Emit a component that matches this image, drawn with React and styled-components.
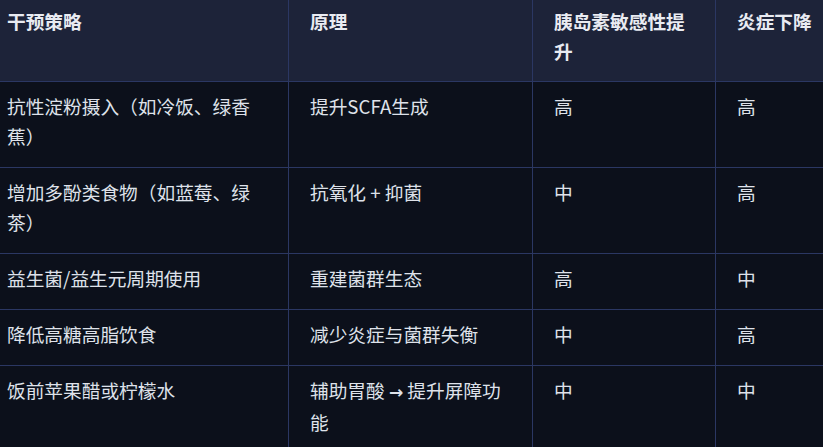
import styled, { createGlobalStyle } from 'styled-components'

const GlobalStyle = createGlobalStyle`
  html, body {
    margin: 0;
    padding: 0;
    background: #0c101b;
  }
  body {
    font-family: "Noto Sans CJK SC", "Noto Sans", sans-serif;
    color: #dfe2ea;
  }
`

const Viewport = styled.div`
  width: 823px;
  height: 447px;
  overflow: hidden;
  background: #0c101b;
`

const Table = styled.table`
  border-collapse: collapse;
  table-layout: fixed;
  width: 870px;
  margin: -4px 0 0 -15px;
  font-size: 18.7px;
  line-height: 30px;
`

const HeadCell = styled.th`
  box-sizing: border-box;
  background: #1d2339;
  color: #e9ebf2;
  font-weight: 700;
  text-align: left;
  vertical-align: top;
  padding: 9px 21px 15px;
  border: 1px solid #2b3763;
  width: ${p => p.$w}px;
`

const Cell = styled.td`
  box-sizing: border-box;
  vertical-align: top;
  padding: 9px 21px 16px;
  border: 1px solid #2b3763;
`

const Row = styled.tr`
  background: #0c101b;
`

const Arrow = styled.span`
  font-family: "DejaVu Sans", sans-serif;
  font-weight: 700;
  font-size: 17px;
`

const columns = [
  { label: '干预策略', width: 303 },
  { label: '原理', width: 244 },
  { label: '胰岛素敏感性提升', width: 183 },
  { label: '炎症下降', width: 140 },
]

const rows = [
  ['抗性淀粉摄入（如冷饭、绿香蕉）', '提升SCFA生成', '高', '高'],
  ['增加多酚类食物（如蓝莓、绿茶）', '抗氧化 + 抑菌', '中', '高'],
  ['益生菌/益生元周期使用', '重建菌群生态', '高', '中'],
  ['降低高糖高脂饮食', '减少炎症与菌群失衡', '中', '高'],
  ['饭前苹果醋或柠檬水', <>辅助胃酸 <Arrow>→</Arrow> 提升屏障功能</>, '中', '中'],
]

export default function App() {
  return (
    <>
      <GlobalStyle />
      <Viewport>
        <Table>
          <thead>
            <tr>
              {columns.map(c => (
                <HeadCell key={c.label} $w={c.width}>{c.label}</HeadCell>
              ))}
            </tr>
          </thead>
          <tbody>
            {rows.map(r => (
              <Row key={r[0]}>
                {r.map((v, i) => <Cell key={i}>{v}</Cell>)}
              </Row>
            ))}
          </tbody>
        </Table>
      </Viewport>
    </>
  )
}
